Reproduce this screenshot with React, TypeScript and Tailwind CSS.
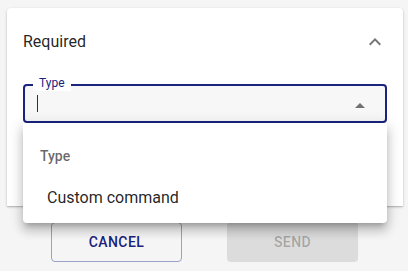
import React from 'react';

const NAVY = '#1a237e';

function ExpandLess() {
  return (
    <svg viewBox="0 0 24 24" className="h-6 w-6" fill="rgba(0,0,0,0.54)">
      <path d="M12 8l-6 6 1.41 1.41L12 10.83l4.59 4.58L18 14z" />
    </svg>
  );
}

function ArrowDropUp() {
  return (
    <svg viewBox="0 0 24 24" className="h-6 w-6" fill="rgba(0,0,0,0.54)">
      <path d="M7 14l5-5 5 5z" />
    </svg>
  );
}

export default function App() {
  return (
    <div
      className="h-[271px] w-[408px] overflow-hidden bg-[#f5f5f5] pt-2"
      style={{ fontFamily: 'Roboto, "Liberation Sans", sans-serif' }}
    >
      {/* card */}
      <div className="relative ml-[7px] h-[198px] w-[396px] rounded-t bg-white px-4 shadow-[0_1px_3px_rgba(0,0,0,0.2),0_1px_1px_rgba(0,0,0,0.12)]">
        <div className="flex h-[68px] items-center justify-between">
          <span className="text-base text-black/[0.87]">Required</span>
          <ExpandLess />
        </div>

        {/* select field */}
        <div className="relative mt-2 flex h-[39px] items-center rounded border-2 border-[#1a237e] bg-[#f7f7f8] pl-[12px] pr-[13px]">
          <span className="absolute -top-[11px] left-[8px] bg-white px-[6px] text-xs leading-4 text-[#1a237e]">
            Type
          </span>
          <span className="h-[17px] w-px bg-black/80" />
          <div className="ml-auto mt-1 flex h-6 w-6 items-center justify-center">
            <ArrowDropUp />
          </div>
        </div>

        {/* open menu */}
        <div className="absolute left-4 top-[115px] z-10 w-[364px] rounded-b bg-white pb-[7px] pt-[9px] shadow-[0_5px_5px_-3px_rgba(0,0,0,0.2),0_8px_10px_1px_rgba(0,0,0,0.14),0_3px_14px_2px_rgba(0,0,0,0.12)]">
          <div className="pl-[17px] text-sm font-medium leading-[48px] text-black/60">Type</div>
          <div className="flex h-9 items-center pl-6 text-base text-black/[0.87]">Custom command</div>
        </div>
      </div>

      {/* actions */}
      <div className="mt-4 flex justify-center gap-[45px] pl-[1px]">
        <button
          className="h-10 w-[131px] rounded border border-[#9aa0c8] text-sm font-medium uppercase tracking-[0.4px]"
          style={{ color: NAVY }}
        >
          Cancel
        </button>
        <button className="h-10 w-[131px] rounded bg-[#dcdcdc] text-sm font-medium uppercase tracking-[0.4px] text-black/[0.26]">
          Send
        </button>
      </div>
    </div>
  );
}
